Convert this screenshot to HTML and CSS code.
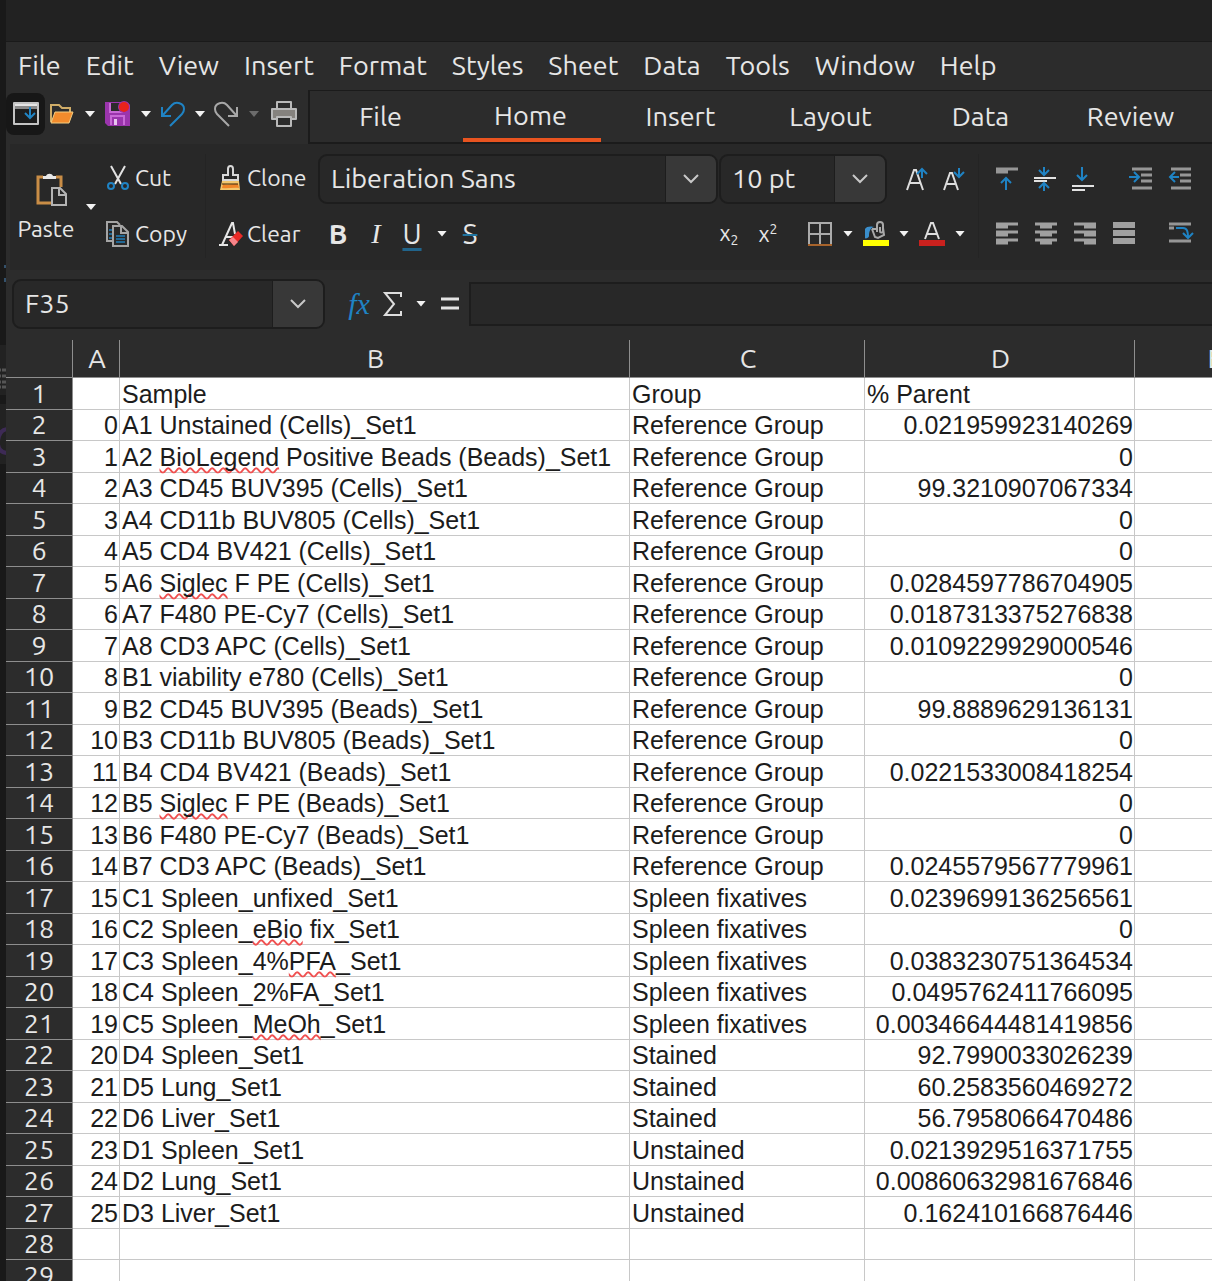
FILE: index.html
```html
<!DOCTYPE html>
<html lang="en">
<head>
    <meta charset="UTF-8">
    <title>Spreadsheet</title>
    <link rel="stylesheet" href="styles.css">
    <script src="sheet.js" defer></script>
</head>
<body>
<div class="edge">
    <svg width="6" height="480" viewBox="0 0 6 480" fill="none"><path d="M0 345h6v50H0zM0 404h6v60H0z" fill="#222"/><path d="M5 265v3M5 278v4" stroke="#34516b" stroke-width="2"/><path d="M0 370h6M0 376h6M0 382h6M0 387h6" stroke="#555" stroke-width="3" stroke-dasharray="1 1 4"/><path d="M7 429q-8 1-9 12t9 12" stroke="#3d2a55" stroke-width="4"/></svg>
</div>
<div class="window">
    <div class="titlebar"></div>

    <nav class="menubar">
        <a href="#">File</a>
        <a href="#">Edit</a>
        <a href="#">View</a>
        <a href="#">Insert</a>
        <a href="#">Format</a>
        <a href="#">Styles</a>
        <a href="#">Sheet</a>
        <a href="#">Data</a>
        <a href="#">Tools</a>
        <a href="#">Window</a>
        <a href="#">Help</a>
    </nav>

    <div class="tabrow">
        <div class="quick">
            <button class="menu-toggle" aria-label="Show menubar">
                <svg width="26" height="24" viewBox="0 0 26 24" fill="none"><path d="M1 1h24v21H1z" fill="#1d1d1d" stroke="#c4c4c4" stroke-width="2" stroke-linejoin="round"/><path d="M2 2h22v5H2z" fill="#8a8a8a"/><path d="M2 3h22" stroke="#e4e4e4" stroke-width="2"/><path d="M17 5v10M12 11l5 5 5-5" stroke="#2185c5" stroke-width="2"/></svg>
            </button>
            <button aria-label="Open">
                <svg width="26" height="22" viewBox="0 0 26 22" fill="none"><path d="M2 19V2h8l3 3h8v4" stroke="#d0ad68" stroke-width="2"/><path d="M6 9h18l-4 11H2z" fill="#f28b2c" stroke="#f3cd80" stroke-width="1"/></svg>
            </button>
            <button class="drop" aria-label="Open recent"></button>
            <button aria-label="Save">
                <svg width="26" height="26" viewBox="0 0 26 26" fill="none"><path d="M0 1h22l3 3v21H3l-3-3z" fill="#9b35ad"/><path d="M6 2h10v8H6z" fill="#2b2b2b"/><path d="M5 2v9h13M6 24v-9h13v9" stroke="#c869d6" stroke-width="2"/><path d="M9 18h3v6H9z" fill="#e8c6ee"/><circle cx="19" cy="6" r="6" fill="#9b35ad"/><circle cx="19" cy="6" r="5" fill="#e8231c"/></svg>
            </button>
            <button class="drop" aria-label="Save options"></button>
            <button aria-label="Undo">
                <svg width="24" height="26" viewBox="0 0 24 26" fill="none" stroke="#1f83c4" stroke-width="2"><path d="M1 6v9h9M2 14L11 4c4-4 12-2 12 4 0 3-1 4-2 5L9 25"/></svg>
            </button>
            <button class="drop" aria-label="Undo history"></button>
            <button aria-label="Redo">
                <svg width="24" height="26" viewBox="0 0 24 26" fill="none" stroke="#a8a8a8" stroke-width="2"><path d="M22 6v9h-9M21 14L12 4C8 0 0 2 0 8c0 3 1 4 2 5l12 12"/></svg>
            </button>
            <button class="drop dim" aria-label="Redo history"></button>
            <button class="print" aria-label="Print">
                <svg width="26" height="26" viewBox="0 0 26 26" fill="none" stroke="#b9b9b9" stroke-width="2" stroke-linejoin="round"><path d="M6 8V1h14v7"/><path d="M1 8h24v10H1z" fill="#85827e"/><path d="M6 16h14v9H6z" fill="#2b2b2b"/></svg>
            </button>
        </div>
        <div class="tabs">
            <button>File</button>
            <button class="active">Home</button>
            <button>Insert</button>
            <button>Layout</button>
            <button>Data</button>
            <button>Review</button>
        </div>
    </div>

    <div class="ribbon">
        <div class="paste">
            <button>
                <svg width="40" height="34" viewBox="-10 0 40 34" fill="none"><path d="M7 4H2v26h13M20 4h5v10" stroke="#c98d46" stroke-width="3"/><path d="M7 6V3h3c1-3 6-3 7 0h3v3z" fill="#e8e8e8"/><path d="M16 15h8l6 6v11H16z" stroke="#b4b4b4" stroke-width="2" fill="#292929"/><path d="M23 15v7h7" stroke="#b4b4b4" stroke-width="2"/></svg>
                <span>Paste</span>
            </button>
            <button class="drop" aria-label="Paste options"></button>
        </div>

        <div class="pair clip">
            <button>
                <svg width="24" height="26" viewBox="0 0 24 26" fill="none" stroke-width="2"><path d="M5 1l10 18M19 1L9 19" stroke="#e2e2e2"/><circle cx="5" cy="21" r="3" stroke="#1f83c4"/><circle cx="19" cy="21" r="3" stroke="#1f83c4"/></svg>Cut
            </button>
            <button>
                <svg width="24" height="26" viewBox="0 0 24 26" fill="none" stroke="#a5a5a5" stroke-width="2"><path d="M7 20H1V1h10l3 3"/><path d="M3 9h3M3 13h3M3 17h3" stroke="#216895"/><path d="M7 5h9l6 6v14H7z" fill="#292929"/><path d="M15 5v7h7"/><path d="M10 15h9M10 18h9M10 21h9" stroke="#216895"/></svg>Copy
            </button>
        </div>

        <div class="pair format">
            <button>
                <svg width="24" height="26" viewBox="0 0 24 26" fill="none"><path d="M9 10V4c0-4 5-4 5 0v6h5v5H4v-5z" stroke="#d8d8d8" stroke-width="2"/><path d="M3 16h17l1 9H1z" fill="#f2c66d"/><path d="M4 19c6 2 9-1 15 0l1 4c-6-1-11 1-17 0z" fill="#ef8528"/><path d="M3 19h16" stroke="#38290f"/></svg>Clone
            </button>
            <button>
                <svg width="24" height="26" viewBox="0 0 24 26" fill="none"><path d="M3 24L13 2h1l2 11M7 16h7M0 24h9" stroke="#e6e6e6" stroke-width="2"/><path d="M10 19l9-9 5 5-9 10z" fill="#e82a27"/><path d="M10 19l4-3 5 5-4 4z" fill="#f7858a"/></svg>Clear
            </button>
        </div>

        <div class="font">
            <div class="combos">
                <div class="combo name">
                    <input type="text" value="Liberation Sans" aria-label="Font name">
                    <button aria-label="Font list"><svg width="18" height="10" viewBox="0 0 18 10" fill="none" stroke="#c8c8c8" stroke-width="2"><path d="M2 1l7 7 7-7"/></svg></button>
                </div>
                <div class="combo size">
                    <input type="text" value="10 pt" aria-label="Font size">
                    <button aria-label="Size list"><svg width="18" height="10" viewBox="0 0 18 10" fill="none" stroke="#c8c8c8" stroke-width="2"><path d="M2 1l7 7 7-7"/></svg></button>
                </div>
                <button class="grow" aria-label="Increase size"><svg width="24" height="26" viewBox="0 0 24 26" fill="none" stroke-width="2"><path d="M2 24L9 4h2l7 20M5 17h10" stroke="#dedede"/><path d="M17 12V3M12 8l5-5 5 5" stroke="#1f83c4"/></svg></button>
                <button aria-label="Decrease size"><svg width="24" height="26" viewBox="0 0 24 26" fill="none" stroke-width="2"><path d="M1 24L7 7h2l6 17M4 18h8" stroke="#dedede"/><path d="M16 2v9M11 6l5 5 5-5" stroke="#1f83c4"/></svg></button>
            </div>
            <div class="styles">
                <button class="b" aria-label="Bold">B</button>
                <button class="i" aria-label="Italic">I</button>
                <button class="u" aria-label="Underline">U</button>
                <button class="drop" aria-label="Underline options"></button>
                <button class="s" aria-label="Strikethrough">S</button>
                <span class="fill"></span>
                <button class="sub" aria-label="Subscript"><span>x<small>2</small></span></button>
                <button class="sup" aria-label="Superscript"><span>x<small>2</small></span></button>
                <button class="borders" aria-label="Borders"><svg width="26" height="26" viewBox="0 0 26 26" fill="none" stroke="#ababab" stroke-width="2"><path d="M2 24V2h22v22M13 2v22M2 13h22"/><path d="M1 24h24" stroke="#a7632b"/></svg></button>
                <button class="drop" aria-label="Border options"></button>
                <button aria-label="Background colour"><svg width="26" height="26" viewBox="0 0 26 26" fill="none"><path d="M2 17V8c1-3 7-3 9-2-4 1-5 5-5 9 0 2-4 3-4 2z" fill="#3a8ecb"/><path d="M9 8l3 8 3 1 6-3-1-7M9 8h5v3M14 9V4c0-4 6-4 6 0v6c0 2-3 2-3 0V6" stroke="#a9a9a9" stroke-width="2"/><path d="M0 19h26v6H0z" fill="#ff0"/></svg></button>
                <button class="drop" aria-label="Background options"></button>
                <button aria-label="Font colour"><svg width="26" height="26" viewBox="0 0 26 26" fill="none"><path d="M6 18l6-16h2l6 16M8 13h10" stroke="#dedede" stroke-width="2"/><path d="M0 19h26v6H0z" fill="#c9211e"/></svg></button>
                <button class="drop" aria-label="Font colour options"></button>
            </div>
        </div>

        <div class="align">
            <div class="line">
                <button aria-label="Align top"><svg width="24" height="26" viewBox="0 0 24 26" fill="none" stroke-width="2"><path d="M1 3h22M1 6h12" stroke="#969696" stroke-width="3"/><path d="M11 24V12M6 17l5-5 5 5" stroke="#1f83c4"/></svg></button>
                <button aria-label="Centre vertically"><svg width="24" height="26" viewBox="0 0 24 26" fill="none" stroke-width="2"><path d="M0 12h22M0 15h13" stroke="#e2e2e2"/><path d="M10 1v7M5 4l5 5 5-5M10 25v-7M5 22l5-5 5 5" stroke="#1f83c4"/></svg></button>
                <button aria-label="Align bottom"><svg width="24" height="26" viewBox="0 0 24 26" fill="none" stroke-width="2"><path d="M-1 20h22M-1 24h13" stroke="#e2e2e2"/><path d="M9 1v13M4 9l5 5 5-5" stroke="#1f83c4"/></svg></button>
                <button class="indent" aria-label="Increase indent"><svg width="24" height="26" viewBox="0 0 24 26" fill="none" stroke-width="3"><path d="M3 3h20M12 9h11M12 15h11M3 22h20" stroke="#969696"/><path d="M0 11h10M5 6l5 5-5 5" stroke="#1f83c4" stroke-width="2"/></svg></button>
                <button aria-label="Decrease indent"><svg width="24" height="26" viewBox="0 0 24 26" fill="none" stroke-width="3"><path d="M3 3h20M12 9h11M12 15h11M3 22h20" stroke="#969696"/><path d="M11 11H2M7 6l-5 5 5 5" stroke="#1f83c4" stroke-width="2"/></svg></button>
            </div>
            <div class="line">
                <button aria-label="Align left"><svg width="24" height="26" viewBox="0 0 24 26" stroke="#a0a0a0" stroke-width="3"><path d="M1 4h22M1 7h12M1 12h22M1 15h12M1 20h22M1 23h12"/></svg></button>
                <button aria-label="Centre"><svg width="24" height="26" viewBox="0 0 24 26" stroke="#a0a0a0" stroke-width="3"><path d="M1 4h22M6 7h12M1 12h22M6 15h12M1 20h22M6 23h12"/></svg></button>
                <button aria-label="Align right"><svg width="24" height="26" viewBox="0 0 24 26" stroke="#a0a0a0" stroke-width="3"><path d="M1 4h22M11 7h12M1 12h22M11 15h12M1 20h22M11 23h12"/></svg></button>
                <button aria-label="Justify"><svg width="24" height="26" viewBox="0 0 24 26" fill="#a0a0a0"><path d="M1 2h22v6H1zM1 10h22v6H1zM1 18h22v6H1z"/></svg></button>
                <button class="wrap" aria-label="Wrap text"><svg width="24" height="26" viewBox="0 0 24 26" fill="none"><path d="M1 4h22M1 8h5M1 21h22" stroke="#969696" stroke-width="3"/><path d="M8 8h7c4 0 5 3 5 10M15 13l5 5 5-5" stroke="#1f83c4" stroke-width="2"/></svg></button>
            </div>
        </div>
    </div>

    <div class="formula">
        <div class="combo ref">
            <input type="text" value="F35" aria-label="Name box">
            <button aria-label="Name list"><svg width="18" height="10" viewBox="0 0 18 10" fill="none" stroke="#c8c8c8" stroke-width="2"><path d="M2 1l7 7 7-7"/></svg></button>
        </div>
        <button class="fx" aria-label="Function wizard"><i>f</i><i>x</i></button>
        <button class="sum" aria-label="Select function"><svg width="20" height="26" viewBox="0 0 20 26" fill="none" stroke="#dedede" stroke-width="2"><path d="M18 6V2H2l9 11L2 24h16v-4"/></svg></button>
        <button class="drop" aria-label="Function list"></button>
        <button class="eq" aria-label="Formula"><svg width="20" height="16" viewBox="0 0 20 16" stroke="#e4e4e4" stroke-width="3"><path d="M1 3h18M1 12h18"/></svg></button>
        <input class="entry" type="text" aria-label="Input line">
    </div>

    <div class="sheet">
        <table>
            <colgroup><col class="c-num"><col class="c-a"><col class="c-b"><col class="c-c"><col class="c-d"><col class="c-e"></colgroup>
            <thead><tr><th></th><th>A</th><th>B</th><th>C</th><th>D</th><th>E</th></tr></thead>
            <tbody id="rows"></tbody>
        </table>
    </div>
</div>
</body>
</html>
```
FILE: styles.css
```css
* { box-sizing: border-box; margin: 0; padding: 0; }
html, body { height: 100%; }
body { display: flex; overflow: hidden; background: #2c2c2c; color: #e6e6e6; font-family: Ubuntu, "Noto Sans", sans-serif; font-size: 27px; }
button, input { border: 0; background: none; color: inherit; font: inherit; }
button { display: flex; align-items: center; justify-content: center; flex-shrink: 0; }
svg { display: block; flex-shrink: 0; overflow: visible; }
a { color: inherit; text-decoration: none; }

.edge { width: 6px; flex-shrink: 0; background: #191919; }
.edge svg { overflow: hidden; }
.window { flex: 1; min-width: 0; display: flex; flex-direction: column; overflow: hidden; }
.titlebar { height: 42px; flex-shrink: 0; background: #222; border-bottom: 1px solid #1a1a1a; }
.menubar { display: flex; gap: 25px; height: 48px; padding: 0 12px 2px; align-items: center; flex-shrink: 0; white-space: nowrap; }

/* small triangle used by every split button */
.drop { width: 10px; height: 6px; background: #f2f2f2; clip-path: polygon(0 0, 100% 0, 50% 100%); }
.drop.dim { background: #6c6c6c; }

.tabrow { display: flex; height: 54px; flex-shrink: 0; }
.quick { display: flex; align-items: center; gap: 10px; width: 302px; padding-bottom: 6px; flex-shrink: 0; }
.menu-toggle { width: 39px; height: 42px; border-radius: 8px; background: #171717; }
.menu-toggle + button { margin-left: -6px; }
.print { margin-left: 2px; }
.tabs { display: flex; flex: 1; border: 1px solid #1b1b1b; border-width: 1px 0 2px 2px; overflow: hidden; padding-left: 3px; }
.tabs button { width: 138px; margin-right: 12px; padding: 0 3px 2px 0; }
.tabs .active { border-bottom: 4px solid #e95420; padding-bottom: 0; }

.ribbon { display: flex; height: 126px; margin-left: 4px; padding: 10px 0 12px; background: #282828; flex-shrink: 0; font-size: 23px; overflow: hidden; }
.paste { display: flex; align-items: center; width: 86px; padding-top: 2px; }
.paste button:first-child { flex-direction: column; gap: 9px; width: 72px; }
.paste .drop { margin-left: 4px; }
.pair { display: flex; flex-direction: column; gap: 6px; flex-shrink: 0; }
.pair button { height: 50px; justify-content: flex-start; gap: 5px; padding-bottom: 3px; }
.clip { width: 110px; padding-left: 10px; border-right: 1px solid #242424; }
.format { width: 112px; padding-left: 13px; }
.format button { gap: 4px; }
.font { display: flex; flex-direction: column; gap: 5px; width: 661px; flex-shrink: 0; border-right: 1px solid #242424; }
.combos, .styles, .line { display: flex; align-items: center; height: 50px; }

.combo { display: flex; height: 50px; border: 2px solid #1d1d1d; border-radius: 9px; background: #282828; overflow: hidden; flex-shrink: 0; font-size: 27px; }
.combo input { flex: 1; min-width: 0; padding: 0 0 2px 11px; }
.combo button { width: 51px; border-left: 1px solid #1d1d1d; background: #383838; }
.name { width: 400px; }
.size { width: 168px; margin-left: 1px; }
.grow { margin: 0 14px 0 18px; }

.styles { padding-left: 7px; padding-right: 13px; gap: 10px; font-size: 28px; }
.fill { flex: 1; }
.b, .i, .u, .s { width: 26px; height: 34px; }
.b { font-weight: bold; }
.i { font-family: "Liberation Serif", serif; font-style: italic; margin-left: 2px; }
.u { text-decoration: underline 3px #21648b; text-underline-offset: 4px; }
.u + .drop { margin-left: 2px; }
.s { text-decoration: line-through 2px #21749f; }
.sub, .sup { width: 26px; font-size: 22px; }
.sup { margin: 0 16px 0 3px; }
.sub small, .sup small { font-size: 14px; }
.sup small { vertical-align: 8px; }
.sub small { vertical-align: -4px; }

.align { display: flex; flex-direction: column; gap: 5px; padding-left: 16px; }
.line { gap: 15px; }
.indent { margin-left: 17px; }
.wrap { margin-left: 17px; }

.formula { display: flex; align-items: center; height: 70px; padding: 0 0 3px 6px; flex-shrink: 0; }
.ref { width: 313px; }
.fx { margin-left: 22px; width: 24px; color: #1f83c4; font-family: "Liberation Serif", serif; font-size: 30px; }
.sum { margin: 0 13px 0 12px; }
.eq { margin: 0 9px 0 14px; }
.entry { flex: 1; min-width: 0; height: 44px; border: 2px solid #1d1d1d; border-right: 0; background: #282828; }

.sheet { flex: 1; min-height: 0; overflow: hidden; }
.sheet table { width: 1288px; table-layout: fixed; border-collapse: separate; border-spacing: 0; }
.c-num { width: 67px; }
.c-a { width: 47px; }
.c-b { width: 510px; }
.c-c { width: 235px; }
.c-d { width: 270px; }
.sheet th { background: #2c2c2c; font-weight: normal; border-right: 1px solid #8e8e8e; border-bottom: 1px solid #8e8e8e; }
.sheet thead th { height: 38px; padding: 0 0 2px 2px; line-height: 34px; }
.sheet tbody tr { height: 32px; }
.sheet tbody tr:nth-child(even) { height: 31px; }
.sheet tbody th { line-height: 28px; padding-bottom: 2px; }
.sheet td { padding: 0 1px 0 2px; background: #fff; color: #1c1c1c; border-right: 1px solid #c8c8c8; border-bottom: 1px solid #c8c8c8; font: 25px/30px "Liberation Sans", Arial, sans-serif; white-space: nowrap; }
.sheet td.n { text-align: right; }
.sheet u { text-decoration: underline wavy #f05050 2px; text-underline-offset: 1px; text-decoration-skip-ink: none; }
```
FILE: sheet.js
```js
var R = "Reference Group", S = "Spleen fixatives", T = "Stained", U = "Unstained";
var data = [
    ["A1 Unstained (Cells)_Set1", R, "0.021959923140269"],
    ["A2 <u>BioLegend</u> Positive Beads (Beads)_Set1", R, "0"],
    ["A3 CD45 BUV395 (Cells)_Set1", R, "99.3210907067334"],
    ["A4 CD11b BUV805 (Cells)_Set1", R, "0"],
    ["A5 CD4 BV421 (Cells)_Set1", R, "0"],
    ["A6 <u>Siglec</u> F PE (Cells)_Set1", R, "0.0284597786704905"],
    ["A7 F480 PE-Cy7 (Cells)_Set1", R, "0.0187313375276838"],
    ["A8 CD3 APC (Cells)_Set1", R, "0.0109229929000546"],
    ["B1 viability e780 (Cells)_Set1", R, "0"],
    ["B2 CD45 BUV395 (Beads)_Set1", R, "99.8889629136131"],
    ["B3 CD11b BUV805 (Beads)_Set1", R, "0"],
    ["B4 CD4 BV421 (Beads)_Set1", R, "0.0221533008418254"],
    ["B5 <u>Siglec</u> F PE (Beads)_Set1", R, "0"],
    ["B6 F480 PE-Cy7 (Beads)_Set1", R, "0"],
    ["B7 CD3 APC (Beads)_Set1", R, "0.0245579567779961"],
    ["C1 Spleen_unfixed_Set1", S, "0.0239699136256561"],
    ["C2 Spleen_<u>eBio</u> fix_Set1", S, "0"],
    ["C3 Spleen_4%<u>PFA</u>_Set1", S, "0.0383230751364534"],
    ["C4 Spleen_2%FA_Set1", S, "0.0495762411766095"],
    ["C5 Spleen_<u>MeOh</u>_Set1", S, "0.00346644481419856"],
    ["D4 Spleen_Set1", T, "92.7990033026239"],
    ["D5 Lung_Set1", T, "60.2583560469272"],
    ["D6 Liver_Set1", T, "56.7958066470486"],
    ["D1 Spleen_Set1", U, "0.0213929516371755"],
    ["D2 Lung_Set1", U, "0.00860632981676846"],
    ["D3 Liver_Set1", U, "0.162410166876446"]
];

function row(num, a, b, c, d, cls) {
    return "<tr><th>" + num + "</th><td class='n'>" + a + "</td><td>" + b + "</td><td>" + c +
        "</td><td class='" + cls + "'>" + d + "</td><td></td></tr>";
}

var html = row(1, "", "Sample", "Group", "% Parent", "");
for (var i = 0; i < data.length; i++) {
    html += row(i + 2, i, data[i][0], data[i][1], data[i][2], "n");
}
html += row(28, "", "", "", "", "") + row(29, "", "", "", "", "");
document.querySelector("#rows").innerHTML = html;
```
